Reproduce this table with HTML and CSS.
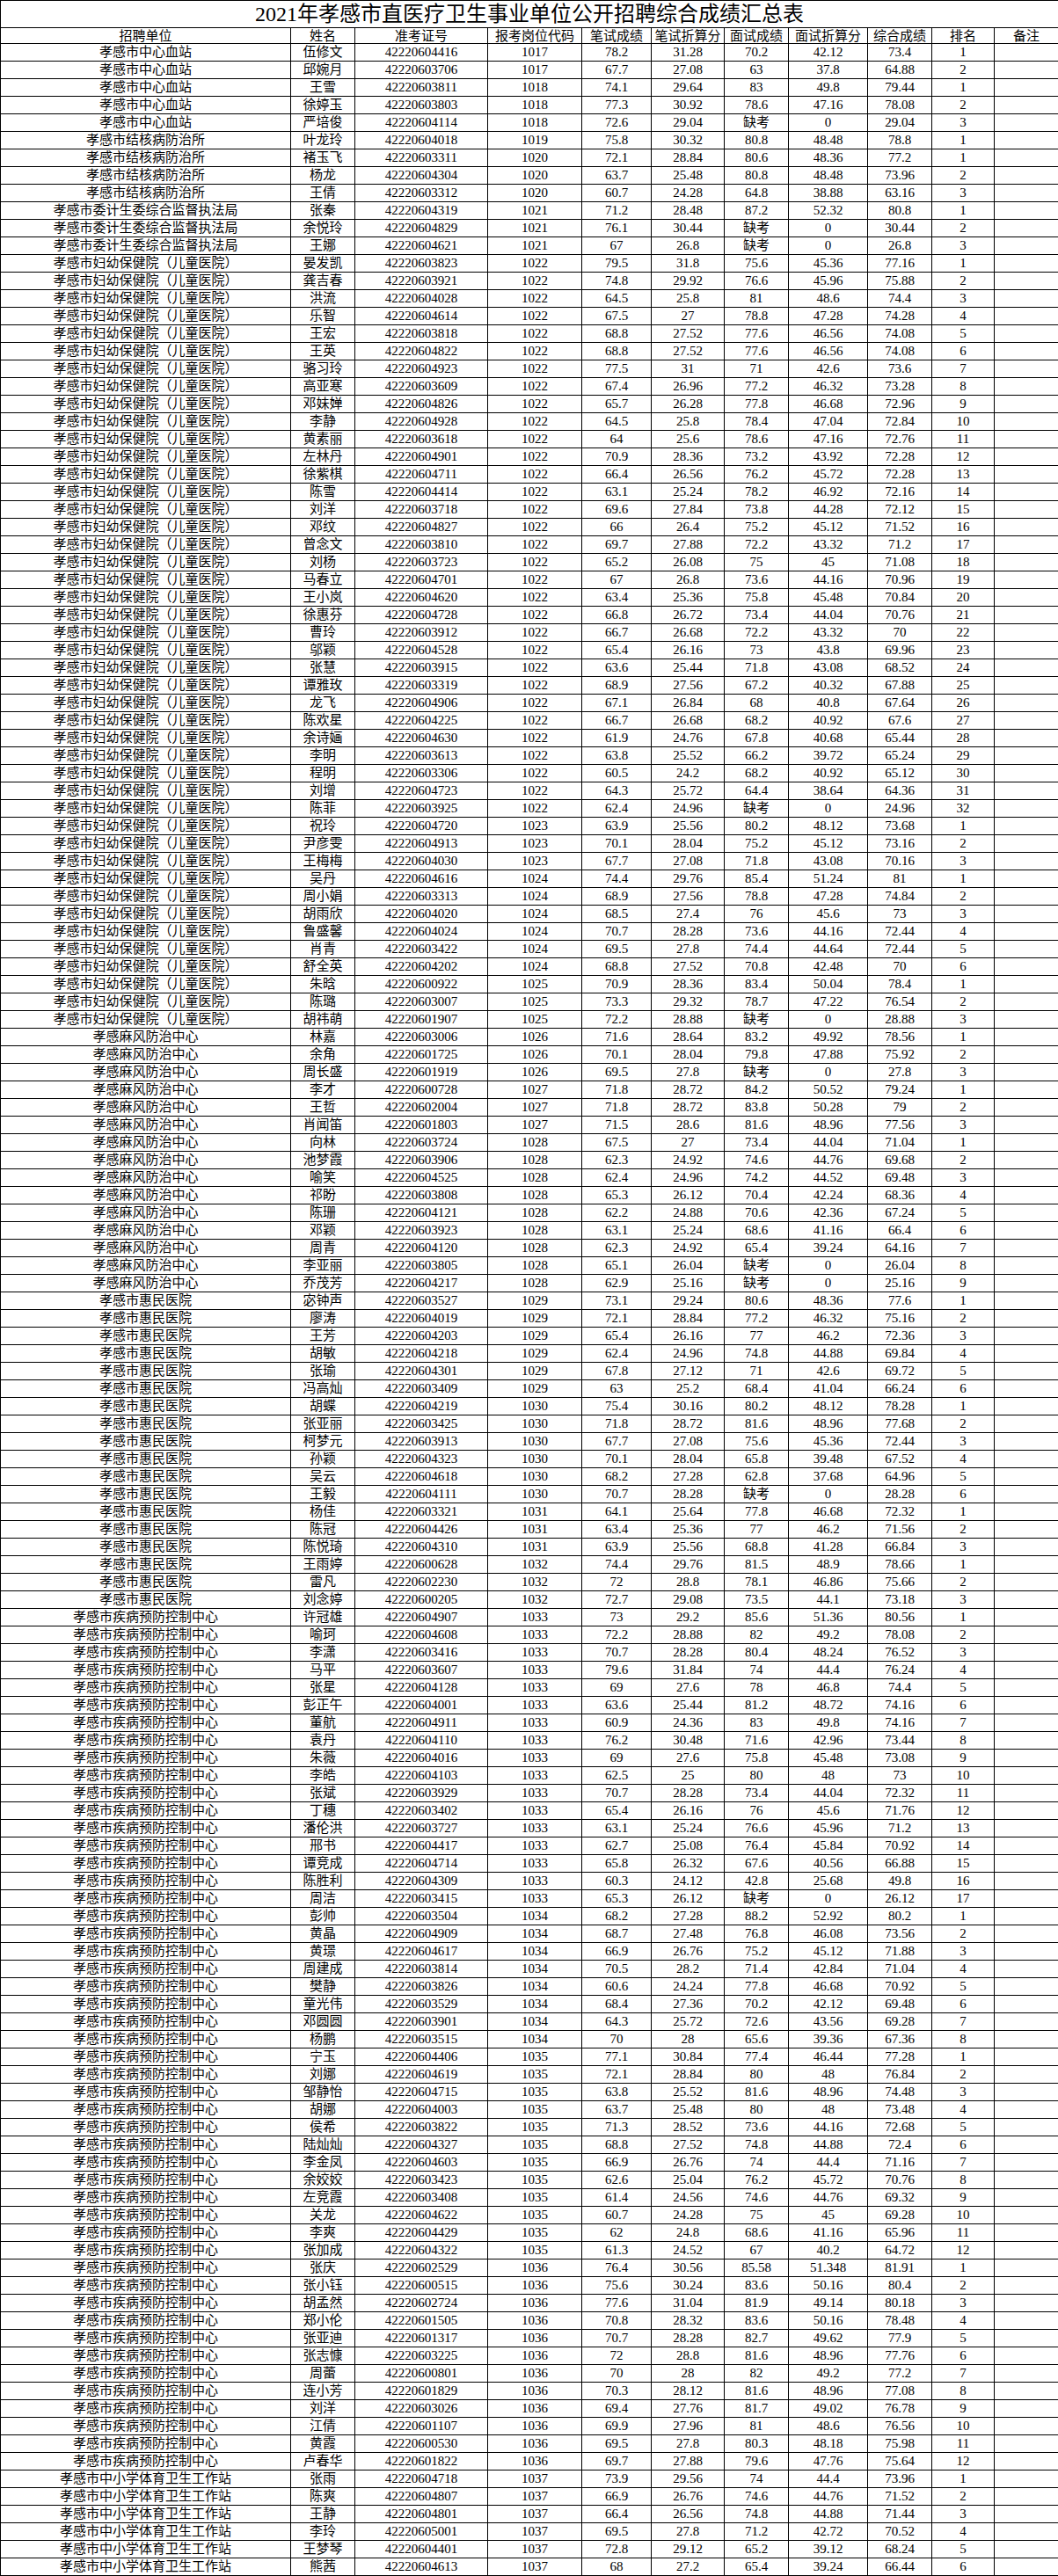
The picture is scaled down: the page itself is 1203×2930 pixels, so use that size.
FILE: index.html
```html
<!DOCTYPE html>
<html lang="zh-CN">
<head>
<meta charset="utf-8">
<title>2021年孝感市直医疗卫生事业单位公开招聘综合成绩汇总表</title>
<link rel="stylesheet" href="styles.css">
</head>
<body>
<table class="sheet">
<colgroup>
<col class="c-unit"><col class="c-name"><col class="c-id"><col class="c-code"><col class="c-s1"><col class="c-s2"><col class="c-s3"><col class="c-s4"><col class="c-s5"><col class="c-rank"><col class="c-note">
</colgroup>
<thead>
<tr class="title-row"><th colspan="11" class="title">2021年孝感市直医疗卫生事业单位公开招聘综合成绩汇总表</th></tr>
<tr class="head-row"><th>招聘单位</th><th>姓名</th><th>准考证号</th><th>报考岗位代码</th><th>笔试成绩</th><th>笔试折算分</th><th>面试成绩</th><th>面试折算分</th><th>综合成绩</th><th>排名</th><th>备注</th></tr>
</thead>
<tbody>
<tr><td>孝感市中心血站</td><td>伍修文</td><td>42220604416</td><td>1017</td><td>78.2</td><td>31.28</td><td>70.2</td><td>42.12</td><td>73.4</td><td>1</td><td></td></tr>
<tr><td>孝感市中心血站</td><td>邱婉月</td><td>42220603706</td><td>1017</td><td>67.7</td><td>27.08</td><td>63</td><td>37.8</td><td>64.88</td><td>2</td><td></td></tr>
<tr><td>孝感市中心血站</td><td>王雪</td><td>42220603811</td><td>1018</td><td>74.1</td><td>29.64</td><td>83</td><td>49.8</td><td>79.44</td><td>1</td><td></td></tr>
<tr><td>孝感市中心血站</td><td>徐婷玉</td><td>42220603803</td><td>1018</td><td>77.3</td><td>30.92</td><td>78.6</td><td>47.16</td><td>78.08</td><td>2</td><td></td></tr>
<tr><td>孝感市中心血站</td><td>严培俊</td><td>42220604114</td><td>1018</td><td>72.6</td><td>29.04</td><td>缺考</td><td>0</td><td>29.04</td><td>3</td><td></td></tr>
<tr><td>孝感市结核病防治所</td><td>叶龙玲</td><td>42220604018</td><td>1019</td><td>75.8</td><td>30.32</td><td>80.8</td><td>48.48</td><td>78.8</td><td>1</td><td></td></tr>
<tr><td>孝感市结核病防治所</td><td>褚玉飞</td><td>42220603311</td><td>1020</td><td>72.1</td><td>28.84</td><td>80.6</td><td>48.36</td><td>77.2</td><td>1</td><td></td></tr>
<tr><td>孝感市结核病防治所</td><td>杨龙</td><td>42220604304</td><td>1020</td><td>63.7</td><td>25.48</td><td>80.8</td><td>48.48</td><td>73.96</td><td>2</td><td></td></tr>
<tr><td>孝感市结核病防治所</td><td>王倩</td><td>42220603312</td><td>1020</td><td>60.7</td><td>24.28</td><td>64.8</td><td>38.88</td><td>63.16</td><td>3</td><td></td></tr>
<tr><td>孝感市委计生委综合监督执法局</td><td>张秦</td><td>42220604319</td><td>1021</td><td>71.2</td><td>28.48</td><td>87.2</td><td>52.32</td><td>80.8</td><td>1</td><td></td></tr>
<tr><td>孝感市委计生委综合监督执法局</td><td>余悦玲</td><td>42220604829</td><td>1021</td><td>76.1</td><td>30.44</td><td>缺考</td><td>0</td><td>30.44</td><td>2</td><td></td></tr>
<tr><td>孝感市委计生委综合监督执法局</td><td>王娜</td><td>42220604621</td><td>1021</td><td>67</td><td>26.8</td><td>缺考</td><td>0</td><td>26.8</td><td>3</td><td></td></tr>
<tr><td>孝感市妇幼保健院（儿童医院）</td><td>晏发凯</td><td>42220603823</td><td>1022</td><td>79.5</td><td>31.8</td><td>75.6</td><td>45.36</td><td>77.16</td><td>1</td><td></td></tr>
<tr><td>孝感市妇幼保健院（儿童医院）</td><td>龚吉春</td><td>42220603921</td><td>1022</td><td>74.8</td><td>29.92</td><td>76.6</td><td>45.96</td><td>75.88</td><td>2</td><td></td></tr>
<tr><td>孝感市妇幼保健院（儿童医院）</td><td>洪流</td><td>42220604028</td><td>1022</td><td>64.5</td><td>25.8</td><td>81</td><td>48.6</td><td>74.4</td><td>3</td><td></td></tr>
<tr><td>孝感市妇幼保健院（儿童医院）</td><td>乐智</td><td>42220604614</td><td>1022</td><td>67.5</td><td>27</td><td>78.8</td><td>47.28</td><td>74.28</td><td>4</td><td></td></tr>
<tr><td>孝感市妇幼保健院（儿童医院）</td><td>王宏</td><td>42220603818</td><td>1022</td><td>68.8</td><td>27.52</td><td>77.6</td><td>46.56</td><td>74.08</td><td>5</td><td></td></tr>
<tr><td>孝感市妇幼保健院（儿童医院）</td><td>王英</td><td>42220604822</td><td>1022</td><td>68.8</td><td>27.52</td><td>77.6</td><td>46.56</td><td>74.08</td><td>6</td><td></td></tr>
<tr><td>孝感市妇幼保健院（儿童医院）</td><td>骆习玲</td><td>42220604923</td><td>1022</td><td>77.5</td><td>31</td><td>71</td><td>42.6</td><td>73.6</td><td>7</td><td></td></tr>
<tr><td>孝感市妇幼保健院（儿童医院）</td><td>高亚寒</td><td>42220603609</td><td>1022</td><td>67.4</td><td>26.96</td><td>77.2</td><td>46.32</td><td>73.28</td><td>8</td><td></td></tr>
<tr><td>孝感市妇幼保健院（儿童医院）</td><td>邓妹婵</td><td>42220604826</td><td>1022</td><td>65.7</td><td>26.28</td><td>77.8</td><td>46.68</td><td>72.96</td><td>9</td><td></td></tr>
<tr><td>孝感市妇幼保健院（儿童医院）</td><td>李静</td><td>42220604928</td><td>1022</td><td>64.5</td><td>25.8</td><td>78.4</td><td>47.04</td><td>72.84</td><td>10</td><td></td></tr>
<tr><td>孝感市妇幼保健院（儿童医院）</td><td>黄素丽</td><td>42220603618</td><td>1022</td><td>64</td><td>25.6</td><td>78.6</td><td>47.16</td><td>72.76</td><td>11</td><td></td></tr>
<tr><td>孝感市妇幼保健院（儿童医院）</td><td>左林丹</td><td>42220604901</td><td>1022</td><td>70.9</td><td>28.36</td><td>73.2</td><td>43.92</td><td>72.28</td><td>12</td><td></td></tr>
<tr><td>孝感市妇幼保健院（儿童医院）</td><td>徐紫棋</td><td>42220604711</td><td>1022</td><td>66.4</td><td>26.56</td><td>76.2</td><td>45.72</td><td>72.28</td><td>13</td><td></td></tr>
<tr><td>孝感市妇幼保健院（儿童医院）</td><td>陈雪</td><td>42220604414</td><td>1022</td><td>63.1</td><td>25.24</td><td>78.2</td><td>46.92</td><td>72.16</td><td>14</td><td></td></tr>
<tr><td>孝感市妇幼保健院（儿童医院）</td><td>刘洋</td><td>42220603718</td><td>1022</td><td>69.6</td><td>27.84</td><td>73.8</td><td>44.28</td><td>72.12</td><td>15</td><td></td></tr>
<tr><td>孝感市妇幼保健院（儿童医院）</td><td>邓纹</td><td>42220604827</td><td>1022</td><td>66</td><td>26.4</td><td>75.2</td><td>45.12</td><td>71.52</td><td>16</td><td></td></tr>
<tr><td>孝感市妇幼保健院（儿童医院）</td><td>曾念文</td><td>42220603810</td><td>1022</td><td>69.7</td><td>27.88</td><td>72.2</td><td>43.32</td><td>71.2</td><td>17</td><td></td></tr>
<tr><td>孝感市妇幼保健院（儿童医院）</td><td>刘杨</td><td>42220603723</td><td>1022</td><td>65.2</td><td>26.08</td><td>75</td><td>45</td><td>71.08</td><td>18</td><td></td></tr>
<tr><td>孝感市妇幼保健院（儿童医院）</td><td>马春立</td><td>42220604701</td><td>1022</td><td>67</td><td>26.8</td><td>73.6</td><td>44.16</td><td>70.96</td><td>19</td><td></td></tr>
<tr><td>孝感市妇幼保健院（儿童医院）</td><td>王小岚</td><td>42220604620</td><td>1022</td><td>63.4</td><td>25.36</td><td>75.8</td><td>45.48</td><td>70.84</td><td>20</td><td></td></tr>
<tr><td>孝感市妇幼保健院（儿童医院）</td><td>徐惠芬</td><td>42220604728</td><td>1022</td><td>66.8</td><td>26.72</td><td>73.4</td><td>44.04</td><td>70.76</td><td>21</td><td></td></tr>
<tr><td>孝感市妇幼保健院（儿童医院）</td><td>曹玲</td><td>42220603912</td><td>1022</td><td>66.7</td><td>26.68</td><td>72.2</td><td>43.32</td><td>70</td><td>22</td><td></td></tr>
<tr><td>孝感市妇幼保健院（儿童医院）</td><td>邬颖</td><td>42220604528</td><td>1022</td><td>65.4</td><td>26.16</td><td>73</td><td>43.8</td><td>69.96</td><td>23</td><td></td></tr>
<tr><td>孝感市妇幼保健院（儿童医院）</td><td>张慧</td><td>42220603915</td><td>1022</td><td>63.6</td><td>25.44</td><td>71.8</td><td>43.08</td><td>68.52</td><td>24</td><td></td></tr>
<tr><td>孝感市妇幼保健院（儿童医院）</td><td>谭雅玫</td><td>42220603319</td><td>1022</td><td>68.9</td><td>27.56</td><td>67.2</td><td>40.32</td><td>67.88</td><td>25</td><td></td></tr>
<tr><td>孝感市妇幼保健院（儿童医院）</td><td>龙飞</td><td>42220604906</td><td>1022</td><td>67.1</td><td>26.84</td><td>68</td><td>40.8</td><td>67.64</td><td>26</td><td></td></tr>
<tr><td>孝感市妇幼保健院（儿童医院）</td><td>陈欢星</td><td>42220604225</td><td>1022</td><td>66.7</td><td>26.68</td><td>68.2</td><td>40.92</td><td>67.6</td><td>27</td><td></td></tr>
<tr><td>孝感市妇幼保健院（儿童医院）</td><td>余诗婳</td><td>42220604630</td><td>1022</td><td>61.9</td><td>24.76</td><td>67.8</td><td>40.68</td><td>65.44</td><td>28</td><td></td></tr>
<tr><td>孝感市妇幼保健院（儿童医院）</td><td>李明</td><td>42220603613</td><td>1022</td><td>63.8</td><td>25.52</td><td>66.2</td><td>39.72</td><td>65.24</td><td>29</td><td></td></tr>
<tr><td>孝感市妇幼保健院（儿童医院）</td><td>程明</td><td>42220603306</td><td>1022</td><td>60.5</td><td>24.2</td><td>68.2</td><td>40.92</td><td>65.12</td><td>30</td><td></td></tr>
<tr><td>孝感市妇幼保健院（儿童医院）</td><td>刘增</td><td>42220604723</td><td>1022</td><td>64.3</td><td>25.72</td><td>64.4</td><td>38.64</td><td>64.36</td><td>31</td><td></td></tr>
<tr><td>孝感市妇幼保健院（儿童医院）</td><td>陈菲</td><td>42220603925</td><td>1022</td><td>62.4</td><td>24.96</td><td>缺考</td><td>0</td><td>24.96</td><td>32</td><td></td></tr>
<tr><td>孝感市妇幼保健院（儿童医院）</td><td>祝玲</td><td>42220604720</td><td>1023</td><td>63.9</td><td>25.56</td><td>80.2</td><td>48.12</td><td>73.68</td><td>1</td><td></td></tr>
<tr><td>孝感市妇幼保健院（儿童医院）</td><td>尹彦雯</td><td>42220604913</td><td>1023</td><td>70.1</td><td>28.04</td><td>75.2</td><td>45.12</td><td>73.16</td><td>2</td><td></td></tr>
<tr><td>孝感市妇幼保健院（儿童医院）</td><td>王梅梅</td><td>42220604030</td><td>1023</td><td>67.7</td><td>27.08</td><td>71.8</td><td>43.08</td><td>70.16</td><td>3</td><td></td></tr>
<tr><td>孝感市妇幼保健院（儿童医院）</td><td>吴丹</td><td>42220604616</td><td>1024</td><td>74.4</td><td>29.76</td><td>85.4</td><td>51.24</td><td>81</td><td>1</td><td></td></tr>
<tr><td>孝感市妇幼保健院（儿童医院）</td><td>周小娟</td><td>42220603313</td><td>1024</td><td>68.9</td><td>27.56</td><td>78.8</td><td>47.28</td><td>74.84</td><td>2</td><td></td></tr>
<tr><td>孝感市妇幼保健院（儿童医院）</td><td>胡雨欣</td><td>42220604020</td><td>1024</td><td>68.5</td><td>27.4</td><td>76</td><td>45.6</td><td>73</td><td>3</td><td></td></tr>
<tr><td>孝感市妇幼保健院（儿童医院）</td><td>鲁盛馨</td><td>42220604024</td><td>1024</td><td>70.7</td><td>28.28</td><td>73.6</td><td>44.16</td><td>72.44</td><td>4</td><td></td></tr>
<tr><td>孝感市妇幼保健院（儿童医院）</td><td>肖青</td><td>42220603422</td><td>1024</td><td>69.5</td><td>27.8</td><td>74.4</td><td>44.64</td><td>72.44</td><td>5</td><td></td></tr>
<tr><td>孝感市妇幼保健院（儿童医院）</td><td>舒全英</td><td>42220604202</td><td>1024</td><td>68.8</td><td>27.52</td><td>70.8</td><td>42.48</td><td>70</td><td>6</td><td></td></tr>
<tr><td>孝感市妇幼保健院（儿童医院）</td><td>朱晗</td><td>42220600922</td><td>1025</td><td>70.9</td><td>28.36</td><td>83.4</td><td>50.04</td><td>78.4</td><td>1</td><td></td></tr>
<tr><td>孝感市妇幼保健院（儿童医院）</td><td>陈璐</td><td>42220603007</td><td>1025</td><td>73.3</td><td>29.32</td><td>78.7</td><td>47.22</td><td>76.54</td><td>2</td><td></td></tr>
<tr><td>孝感市妇幼保健院（儿童医院）</td><td>胡祎萌</td><td>42220601907</td><td>1025</td><td>72.2</td><td>28.88</td><td>缺考</td><td>0</td><td>28.88</td><td>3</td><td></td></tr>
<tr><td>孝感麻风防治中心</td><td>林嘉</td><td>42220603006</td><td>1026</td><td>71.6</td><td>28.64</td><td>83.2</td><td>49.92</td><td>78.56</td><td>1</td><td></td></tr>
<tr><td>孝感麻风防治中心</td><td>余角</td><td>42220601725</td><td>1026</td><td>70.1</td><td>28.04</td><td>79.8</td><td>47.88</td><td>75.92</td><td>2</td><td></td></tr>
<tr><td>孝感麻风防治中心</td><td>周长盛</td><td>42220601919</td><td>1026</td><td>69.5</td><td>27.8</td><td>缺考</td><td>0</td><td>27.8</td><td>3</td><td></td></tr>
<tr><td>孝感麻风防治中心</td><td>李才</td><td>42220600728</td><td>1027</td><td>71.8</td><td>28.72</td><td>84.2</td><td>50.52</td><td>79.24</td><td>1</td><td></td></tr>
<tr><td>孝感麻风防治中心</td><td>王哲</td><td>42220602004</td><td>1027</td><td>71.8</td><td>28.72</td><td>83.8</td><td>50.28</td><td>79</td><td>2</td><td></td></tr>
<tr><td>孝感麻风防治中心</td><td>肖闻笛</td><td>42220601803</td><td>1027</td><td>71.5</td><td>28.6</td><td>81.6</td><td>48.96</td><td>77.56</td><td>3</td><td></td></tr>
<tr><td>孝感麻风防治中心</td><td>向林</td><td>42220603724</td><td>1028</td><td>67.5</td><td>27</td><td>73.4</td><td>44.04</td><td>71.04</td><td>1</td><td></td></tr>
<tr><td>孝感麻风防治中心</td><td>池梦霞</td><td>42220603906</td><td>1028</td><td>62.3</td><td>24.92</td><td>74.6</td><td>44.76</td><td>69.68</td><td>2</td><td></td></tr>
<tr><td>孝感麻风防治中心</td><td>喻笑</td><td>42220604525</td><td>1028</td><td>62.4</td><td>24.96</td><td>74.2</td><td>44.52</td><td>69.48</td><td>3</td><td></td></tr>
<tr><td>孝感麻风防治中心</td><td>祁盼</td><td>42220603808</td><td>1028</td><td>65.3</td><td>26.12</td><td>70.4</td><td>42.24</td><td>68.36</td><td>4</td><td></td></tr>
<tr><td>孝感麻风防治中心</td><td>陈珊</td><td>42220604121</td><td>1028</td><td>62.2</td><td>24.88</td><td>70.6</td><td>42.36</td><td>67.24</td><td>5</td><td></td></tr>
<tr><td>孝感麻风防治中心</td><td>邓颖</td><td>42220603923</td><td>1028</td><td>63.1</td><td>25.24</td><td>68.6</td><td>41.16</td><td>66.4</td><td>6</td><td></td></tr>
<tr><td>孝感麻风防治中心</td><td>周青</td><td>42220604120</td><td>1028</td><td>62.3</td><td>24.92</td><td>65.4</td><td>39.24</td><td>64.16</td><td>7</td><td></td></tr>
<tr><td>孝感麻风防治中心</td><td>李亚丽</td><td>42220603805</td><td>1028</td><td>65.1</td><td>26.04</td><td>缺考</td><td>0</td><td>26.04</td><td>8</td><td></td></tr>
<tr><td>孝感麻风防治中心</td><td>乔茂芳</td><td>42220604217</td><td>1028</td><td>62.9</td><td>25.16</td><td>缺考</td><td>0</td><td>25.16</td><td>9</td><td></td></tr>
<tr><td>孝感市惠民医院</td><td>宓钟声</td><td>42220603527</td><td>1029</td><td>73.1</td><td>29.24</td><td>80.6</td><td>48.36</td><td>77.6</td><td>1</td><td></td></tr>
<tr><td>孝感市惠民医院</td><td>廖涛</td><td>42220604019</td><td>1029</td><td>72.1</td><td>28.84</td><td>77.2</td><td>46.32</td><td>75.16</td><td>2</td><td></td></tr>
<tr><td>孝感市惠民医院</td><td>王芳</td><td>42220604203</td><td>1029</td><td>65.4</td><td>26.16</td><td>77</td><td>46.2</td><td>72.36</td><td>3</td><td></td></tr>
<tr><td>孝感市惠民医院</td><td>胡敏</td><td>42220604218</td><td>1029</td><td>62.4</td><td>24.96</td><td>74.8</td><td>44.88</td><td>69.84</td><td>4</td><td></td></tr>
<tr><td>孝感市惠民医院</td><td>张瑜</td><td>42220604301</td><td>1029</td><td>67.8</td><td>27.12</td><td>71</td><td>42.6</td><td>69.72</td><td>5</td><td></td></tr>
<tr><td>孝感市惠民医院</td><td>冯高灿</td><td>42220603409</td><td>1029</td><td>63</td><td>25.2</td><td>68.4</td><td>41.04</td><td>66.24</td><td>6</td><td></td></tr>
<tr><td>孝感市惠民医院</td><td>胡蝶</td><td>42220604219</td><td>1030</td><td>75.4</td><td>30.16</td><td>80.2</td><td>48.12</td><td>78.28</td><td>1</td><td></td></tr>
<tr><td>孝感市惠民医院</td><td>张亚丽</td><td>42220603425</td><td>1030</td><td>71.8</td><td>28.72</td><td>81.6</td><td>48.96</td><td>77.68</td><td>2</td><td></td></tr>
<tr><td>孝感市惠民医院</td><td>柯梦元</td><td>42220603913</td><td>1030</td><td>67.7</td><td>27.08</td><td>75.6</td><td>45.36</td><td>72.44</td><td>3</td><td></td></tr>
<tr><td>孝感市惠民医院</td><td>孙颖</td><td>42220604323</td><td>1030</td><td>70.1</td><td>28.04</td><td>65.8</td><td>39.48</td><td>67.52</td><td>4</td><td></td></tr>
<tr><td>孝感市惠民医院</td><td>吴云</td><td>42220604618</td><td>1030</td><td>68.2</td><td>27.28</td><td>62.8</td><td>37.68</td><td>64.96</td><td>5</td><td></td></tr>
<tr><td>孝感市惠民医院</td><td>王毅</td><td>42220604111</td><td>1030</td><td>70.7</td><td>28.28</td><td>缺考</td><td>0</td><td>28.28</td><td>6</td><td></td></tr>
<tr><td>孝感市惠民医院</td><td>杨佳</td><td>42220603321</td><td>1031</td><td>64.1</td><td>25.64</td><td>77.8</td><td>46.68</td><td>72.32</td><td>1</td><td></td></tr>
<tr><td>孝感市惠民医院</td><td>陈冠</td><td>42220604426</td><td>1031</td><td>63.4</td><td>25.36</td><td>77</td><td>46.2</td><td>71.56</td><td>2</td><td></td></tr>
<tr><td>孝感市惠民医院</td><td>陈悦琦</td><td>42220604310</td><td>1031</td><td>63.9</td><td>25.56</td><td>68.8</td><td>41.28</td><td>66.84</td><td>3</td><td></td></tr>
<tr><td>孝感市惠民医院</td><td>王雨婷</td><td>42220600628</td><td>1032</td><td>74.4</td><td>29.76</td><td>81.5</td><td>48.9</td><td>78.66</td><td>1</td><td></td></tr>
<tr><td>孝感市惠民医院</td><td>雷凡</td><td>42220602230</td><td>1032</td><td>72</td><td>28.8</td><td>78.1</td><td>46.86</td><td>75.66</td><td>2</td><td></td></tr>
<tr><td>孝感市惠民医院</td><td>刘念婷</td><td>42220600205</td><td>1032</td><td>72.7</td><td>29.08</td><td>73.5</td><td>44.1</td><td>73.18</td><td>3</td><td></td></tr>
<tr><td>孝感市疾病预防控制中心</td><td>许冠雄</td><td>42220604907</td><td>1033</td><td>73</td><td>29.2</td><td>85.6</td><td>51.36</td><td>80.56</td><td>1</td><td></td></tr>
<tr><td>孝感市疾病预防控制中心</td><td>喻珂</td><td>42220604608</td><td>1033</td><td>72.2</td><td>28.88</td><td>82</td><td>49.2</td><td>78.08</td><td>2</td><td></td></tr>
<tr><td>孝感市疾病预防控制中心</td><td>李潇</td><td>42220603416</td><td>1033</td><td>70.7</td><td>28.28</td><td>80.4</td><td>48.24</td><td>76.52</td><td>3</td><td></td></tr>
<tr><td>孝感市疾病预防控制中心</td><td>马平</td><td>42220603607</td><td>1033</td><td>79.6</td><td>31.84</td><td>74</td><td>44.4</td><td>76.24</td><td>4</td><td></td></tr>
<tr><td>孝感市疾病预防控制中心</td><td>张星</td><td>42220604128</td><td>1033</td><td>69</td><td>27.6</td><td>78</td><td>46.8</td><td>74.4</td><td>5</td><td></td></tr>
<tr><td>孝感市疾病预防控制中心</td><td>彭正午</td><td>42220604001</td><td>1033</td><td>63.6</td><td>25.44</td><td>81.2</td><td>48.72</td><td>74.16</td><td>6</td><td></td></tr>
<tr><td>孝感市疾病预防控制中心</td><td>董航</td><td>42220604911</td><td>1033</td><td>60.9</td><td>24.36</td><td>83</td><td>49.8</td><td>74.16</td><td>7</td><td></td></tr>
<tr><td>孝感市疾病预防控制中心</td><td>袁丹</td><td>42220604110</td><td>1033</td><td>76.2</td><td>30.48</td><td>71.6</td><td>42.96</td><td>73.44</td><td>8</td><td></td></tr>
<tr><td>孝感市疾病预防控制中心</td><td>朱薇</td><td>42220604016</td><td>1033</td><td>69</td><td>27.6</td><td>75.8</td><td>45.48</td><td>73.08</td><td>9</td><td></td></tr>
<tr><td>孝感市疾病预防控制中心</td><td>李皓</td><td>42220604103</td><td>1033</td><td>62.5</td><td>25</td><td>80</td><td>48</td><td>73</td><td>10</td><td></td></tr>
<tr><td>孝感市疾病预防控制中心</td><td>张斌</td><td>42220603929</td><td>1033</td><td>70.7</td><td>28.28</td><td>73.4</td><td>44.04</td><td>72.32</td><td>11</td><td></td></tr>
<tr><td>孝感市疾病预防控制中心</td><td>丁穗</td><td>42220603402</td><td>1033</td><td>65.4</td><td>26.16</td><td>76</td><td>45.6</td><td>71.76</td><td>12</td><td></td></tr>
<tr><td>孝感市疾病预防控制中心</td><td>潘伦洪</td><td>42220603727</td><td>1033</td><td>63.1</td><td>25.24</td><td>76.6</td><td>45.96</td><td>71.2</td><td>13</td><td></td></tr>
<tr><td>孝感市疾病预防控制中心</td><td>邢书</td><td>42220604417</td><td>1033</td><td>62.7</td><td>25.08</td><td>76.4</td><td>45.84</td><td>70.92</td><td>14</td><td></td></tr>
<tr><td>孝感市疾病预防控制中心</td><td>谭竞成</td><td>42220604714</td><td>1033</td><td>65.8</td><td>26.32</td><td>67.6</td><td>40.56</td><td>66.88</td><td>15</td><td></td></tr>
<tr><td>孝感市疾病预防控制中心</td><td>陈胜利</td><td>42220604309</td><td>1033</td><td>60.3</td><td>24.12</td><td>42.8</td><td>25.68</td><td>49.8</td><td>16</td><td></td></tr>
<tr><td>孝感市疾病预防控制中心</td><td>周洁</td><td>42220603415</td><td>1033</td><td>65.3</td><td>26.12</td><td>缺考</td><td>0</td><td>26.12</td><td>17</td><td></td></tr>
<tr><td>孝感市疾病预防控制中心</td><td>彭帅</td><td>42220603504</td><td>1034</td><td>68.2</td><td>27.28</td><td>88.2</td><td>52.92</td><td>80.2</td><td>1</td><td></td></tr>
<tr><td>孝感市疾病预防控制中心</td><td>黄晶</td><td>42220604909</td><td>1034</td><td>68.7</td><td>27.48</td><td>76.8</td><td>46.08</td><td>73.56</td><td>2</td><td></td></tr>
<tr><td>孝感市疾病预防控制中心</td><td>黄璟</td><td>42220604617</td><td>1034</td><td>66.9</td><td>26.76</td><td>75.2</td><td>45.12</td><td>71.88</td><td>3</td><td></td></tr>
<tr><td>孝感市疾病预防控制中心</td><td>周建成</td><td>42220603814</td><td>1034</td><td>70.5</td><td>28.2</td><td>71.4</td><td>42.84</td><td>71.04</td><td>4</td><td></td></tr>
<tr><td>孝感市疾病预防控制中心</td><td>樊静</td><td>42220603826</td><td>1034</td><td>60.6</td><td>24.24</td><td>77.8</td><td>46.68</td><td>70.92</td><td>5</td><td></td></tr>
<tr><td>孝感市疾病预防控制中心</td><td>童光伟</td><td>42220603529</td><td>1034</td><td>68.4</td><td>27.36</td><td>70.2</td><td>42.12</td><td>69.48</td><td>6</td><td></td></tr>
<tr><td>孝感市疾病预防控制中心</td><td>邓圆圆</td><td>42220603901</td><td>1034</td><td>64.3</td><td>25.72</td><td>72.6</td><td>43.56</td><td>69.28</td><td>7</td><td></td></tr>
<tr><td>孝感市疾病预防控制中心</td><td>杨鹏</td><td>42220603515</td><td>1034</td><td>70</td><td>28</td><td>65.6</td><td>39.36</td><td>67.36</td><td>8</td><td></td></tr>
<tr><td>孝感市疾病预防控制中心</td><td>宁玉</td><td>42220604406</td><td>1035</td><td>77.1</td><td>30.84</td><td>77.4</td><td>46.44</td><td>77.28</td><td>1</td><td></td></tr>
<tr><td>孝感市疾病预防控制中心</td><td>刘娜</td><td>42220604619</td><td>1035</td><td>72.1</td><td>28.84</td><td>80</td><td>48</td><td>76.84</td><td>2</td><td></td></tr>
<tr><td>孝感市疾病预防控制中心</td><td>邹静怡</td><td>42220604715</td><td>1035</td><td>63.8</td><td>25.52</td><td>81.6</td><td>48.96</td><td>74.48</td><td>3</td><td></td></tr>
<tr><td>孝感市疾病预防控制中心</td><td>胡娜</td><td>42220604003</td><td>1035</td><td>63.7</td><td>25.48</td><td>80</td><td>48</td><td>73.48</td><td>4</td><td></td></tr>
<tr><td>孝感市疾病预防控制中心</td><td>侯希</td><td>42220603822</td><td>1035</td><td>71.3</td><td>28.52</td><td>73.6</td><td>44.16</td><td>72.68</td><td>5</td><td></td></tr>
<tr><td>孝感市疾病预防控制中心</td><td>陆灿灿</td><td>42220604327</td><td>1035</td><td>68.8</td><td>27.52</td><td>74.8</td><td>44.88</td><td>72.4</td><td>6</td><td></td></tr>
<tr><td>孝感市疾病预防控制中心</td><td>李金凤</td><td>42220604603</td><td>1035</td><td>66.9</td><td>26.76</td><td>74</td><td>44.4</td><td>71.16</td><td>7</td><td></td></tr>
<tr><td>孝感市疾病预防控制中心</td><td>余姣姣</td><td>42220603423</td><td>1035</td><td>62.6</td><td>25.04</td><td>76.2</td><td>45.72</td><td>70.76</td><td>8</td><td></td></tr>
<tr><td>孝感市疾病预防控制中心</td><td>左竞霞</td><td>42220603408</td><td>1035</td><td>61.4</td><td>24.56</td><td>74.6</td><td>44.76</td><td>69.32</td><td>9</td><td></td></tr>
<tr><td>孝感市疾病预防控制中心</td><td>关龙</td><td>42220604622</td><td>1035</td><td>60.7</td><td>24.28</td><td>75</td><td>45</td><td>69.28</td><td>10</td><td></td></tr>
<tr><td>孝感市疾病预防控制中心</td><td>李爽</td><td>42220604429</td><td>1035</td><td>62</td><td>24.8</td><td>68.6</td><td>41.16</td><td>65.96</td><td>11</td><td></td></tr>
<tr><td>孝感市疾病预防控制中心</td><td>张加成</td><td>42220604322</td><td>1035</td><td>61.3</td><td>24.52</td><td>67</td><td>40.2</td><td>64.72</td><td>12</td><td></td></tr>
<tr><td>孝感市疾病预防控制中心</td><td>张庆</td><td>42220602529</td><td>1036</td><td>76.4</td><td>30.56</td><td>85.58</td><td>51.348</td><td>81.91</td><td>1</td><td></td></tr>
<tr><td>孝感市疾病预防控制中心</td><td>张小钰</td><td>42220600515</td><td>1036</td><td>75.6</td><td>30.24</td><td>83.6</td><td>50.16</td><td>80.4</td><td>2</td><td></td></tr>
<tr><td>孝感市疾病预防控制中心</td><td>胡孟然</td><td>42220602724</td><td>1036</td><td>77.6</td><td>31.04</td><td>81.9</td><td>49.14</td><td>80.18</td><td>3</td><td></td></tr>
<tr><td>孝感市疾病预防控制中心</td><td>郑小伦</td><td>42220601505</td><td>1036</td><td>70.8</td><td>28.32</td><td>83.6</td><td>50.16</td><td>78.48</td><td>4</td><td></td></tr>
<tr><td>孝感市疾病预防控制中心</td><td>张亚迪</td><td>42220601317</td><td>1036</td><td>70.7</td><td>28.28</td><td>82.7</td><td>49.62</td><td>77.9</td><td>5</td><td></td></tr>
<tr><td>孝感市疾病预防控制中心</td><td>张志慷</td><td>42220603225</td><td>1036</td><td>72</td><td>28.8</td><td>81.6</td><td>48.96</td><td>77.76</td><td>6</td><td></td></tr>
<tr><td>孝感市疾病预防控制中心</td><td>周蕾</td><td>42220600801</td><td>1036</td><td>70</td><td>28</td><td>82</td><td>49.2</td><td>77.2</td><td>7</td><td></td></tr>
<tr><td>孝感市疾病预防控制中心</td><td>连小芳</td><td>42220601829</td><td>1036</td><td>70.3</td><td>28.12</td><td>81.6</td><td>48.96</td><td>77.08</td><td>8</td><td></td></tr>
<tr><td>孝感市疾病预防控制中心</td><td>刘洋</td><td>42220603026</td><td>1036</td><td>69.4</td><td>27.76</td><td>81.7</td><td>49.02</td><td>76.78</td><td>9</td><td></td></tr>
<tr><td>孝感市疾病预防控制中心</td><td>江倩</td><td>42220601107</td><td>1036</td><td>69.9</td><td>27.96</td><td>81</td><td>48.6</td><td>76.56</td><td>10</td><td></td></tr>
<tr><td>孝感市疾病预防控制中心</td><td>黄霞</td><td>42220600530</td><td>1036</td><td>69.5</td><td>27.8</td><td>80.3</td><td>48.18</td><td>75.98</td><td>11</td><td></td></tr>
<tr><td>孝感市疾病预防控制中心</td><td>卢春华</td><td>42220601822</td><td>1036</td><td>69.7</td><td>27.88</td><td>79.6</td><td>47.76</td><td>75.64</td><td>12</td><td></td></tr>
<tr><td>孝感市中小学体育卫生工作站</td><td>张雨</td><td>42220604718</td><td>1037</td><td>73.9</td><td>29.56</td><td>74</td><td>44.4</td><td>73.96</td><td>1</td><td></td></tr>
<tr><td>孝感市中小学体育卫生工作站</td><td>陈爽</td><td>42220604807</td><td>1037</td><td>66.9</td><td>26.76</td><td>74.6</td><td>44.76</td><td>71.52</td><td>2</td><td></td></tr>
<tr><td>孝感市中小学体育卫生工作站</td><td>王静</td><td>42220604801</td><td>1037</td><td>66.4</td><td>26.56</td><td>74.8</td><td>44.88</td><td>71.44</td><td>3</td><td></td></tr>
<tr><td>孝感市中小学体育卫生工作站</td><td>李玲</td><td>42220605001</td><td>1037</td><td>69.5</td><td>27.8</td><td>71.2</td><td>42.72</td><td>70.52</td><td>4</td><td></td></tr>
<tr><td>孝感市中小学体育卫生工作站</td><td>王梦琴</td><td>42220604401</td><td>1037</td><td>72.8</td><td>29.12</td><td>65.2</td><td>39.12</td><td>68.24</td><td>5</td><td></td></tr>
<tr><td>孝感市中小学体育卫生工作站</td><td>熊茜</td><td>42220604613</td><td>1037</td><td>68</td><td>27.2</td><td>65.4</td><td>39.24</td><td>66.44</td><td>6</td><td></td></tr>
</tbody>
</table>
</body>
</html>
```
FILE: styles.css
```css
html, body {
  margin: 0;
  padding: 0;
  background: #ffffff;
}

body {
  font-family: "Liberation Serif", "Noto Sans CJK SC", serif;
  color: #000000;
}

.sheet {
  border-collapse: collapse;
  table-layout: fixed;
  width: 1203px;
}

.c-unit { width: 330px; }
.c-name { width: 73px; }
.c-id { width: 151px; }
.c-code { width: 107px; }
.c-s1 { width: 79px; }
.c-s2 { width: 83px; }
.c-s3 { width: 73px; }
.c-s4 { width: 90px; }
.c-s5 { width: 73px; }
.c-rank { width: 71px; }
.c-note { width: 73px; }

.sheet th,
.sheet td {
  border: 1px solid #000000;
  padding: 0;
  text-align: center;
  vertical-align: middle;
  font-weight: normal;
  white-space: nowrap;
  overflow: hidden;
  font-size: 15px;
}

.sheet tbody td {
  height: 19px;
  line-height: 17px;
}

.head-row th {
  height: 17px;
  line-height: 16px;
}

.title-row .title {
  height: 30px;
  line-height: 28px;
  font-size: 24px;
}
```
